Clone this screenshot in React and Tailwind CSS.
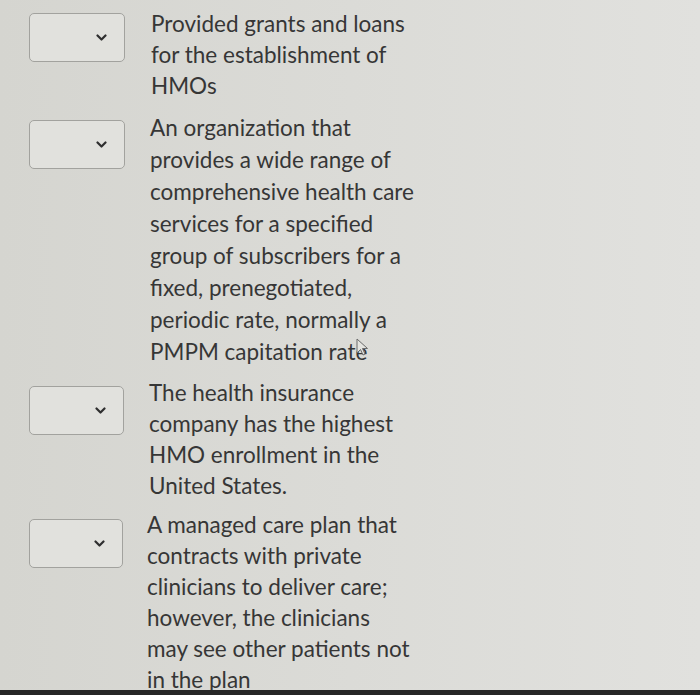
import React from "react";

const items = [
  {
    id: 1,
    row: "mt-[8px]",
    box: "mt-[5px] w-[96px]",
    text: "ml-[26px] leading-[31px]",
    lines: ["Provided grants and loans", "for the establishment of", "HMOs"],
  },
  {
    id: 2,
    row: "mt-[11px]",
    box: "mt-[8px] w-[96px]",
    text: "ml-[25px] leading-[32px]",
    lines: [
      "An organization that",
      "provides a wide range of",
      "comprehensive health care",
      "services for a specified",
      "group of subscribers for a",
      "fixed, prenegotiated,",
      "periodic rate, normally a",
      "PMPM capitation rate",
    ],
  },
  {
    id: 3,
    row: "mt-[9px]",
    box: "mt-[9px] w-[95px]",
    text: "ml-[25px] leading-[31px]",
    lines: [
      "The health insurance",
      "company has the highest",
      "HMO enrollment in the",
      "United States.",
    ],
  },
  {
    id: 4,
    row: "mt-[8px]",
    box: "mt-[10px] w-[94px]",
    text: "ml-[24px] leading-[31px]",
    lines: [
      "A managed care plan that",
      "contracts with private",
      "clinicians to deliver care;",
      "however, the clinicians",
      "may see other patients not",
      "in the plan",
    ],
  },
];

const Select = ({ className }) => (
  <div
    className={`${className} h-[49px] shrink-0 rounded-[5px] border border-[#a2a29e] bg-[#e1e1dd] flex items-center justify-end pr-[17px]`}
  >
    <svg width="11" height="8" viewBox="0 0 11 8" fill="none">
      <path d="M1.5 1.5 L5.5 5.5 L9.5 1.5" stroke="#2e2e2e" strokeWidth="2.2" strokeLinecap="round" strokeLinejoin="round" />
    </svg>
  </div>
);

export default function App() {
  return (
    <div className="w-[700px] h-[695px] overflow-hidden flex flex-col bg-gradient-to-r from-[#d5d5d0] via-[#dbdbd7] to-[#e1e1de] font-['Lato','Liberation_Sans',sans-serif] text-[#363636]">
      <div className="h-[690px] overflow-hidden pl-[29px]">
        {items.map((item) => (
          <div key={item.id} className={`flex ${item.row}`}>
            <Select className={item.box} />
            <div className={`text-[22.5px] ${item.text}`}>
              {item.lines.map((l, i) => (
                <div key={l} className="relative">
                  {l}
                  {item.id === 2 && i === item.lines.length - 1 && (
                    <svg
                      className="absolute left-[206px] top-[2px]"
                      width="14"
                      height="20"
                      viewBox="0 0 14 20"
                      fill="none"
                    >
                      <path d="M1 1 L1 15 L4.5 11.5 L7 17 L9 16 L6.5 10.5 L11.5 10.5 Z" fill="#e4e4e0" stroke="#6a6a6a" strokeWidth="1" strokeLinejoin="round" />
                    </svg>
                  )}
                </div>
              ))}
            </div>
          </div>
        ))}
      </div>
      <div className="h-[5px] bg-[#262626]" />
    </div>
  );
}
